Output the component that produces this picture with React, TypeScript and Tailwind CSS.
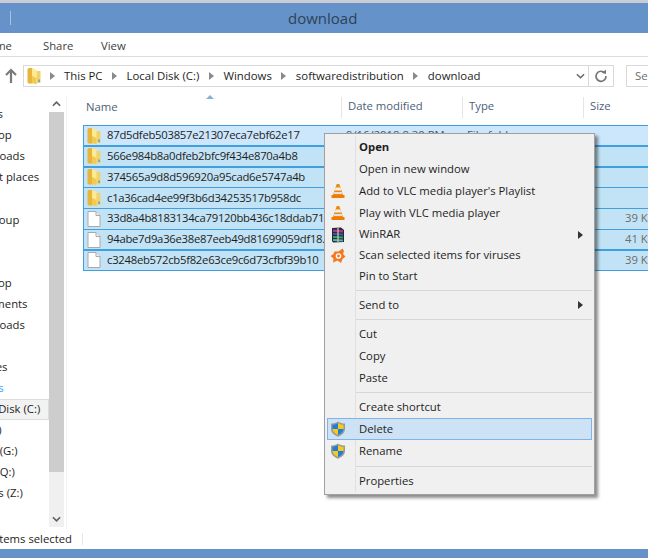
import type { ReactNode } from "react"

const font = { fontFamily: '"Open Sans", "Noto Sans", sans-serif' }

function FolderIcon() {
  return (
    <svg viewBox="0 0 14 18" className="h-[18px] w-[14px] shrink-0">
      <path d="M0.5 2.5 L1.5 1 H5 L6 2 V16.5 H1.5 L0.5 15.5 Z" fill="#e6b63c" />
      <path d="M5 1 L9.5 3 V17.5 L5 15.5 Z" fill="#fdeb94" />
      <path d="M9.5 4 H13.5 V16 H9.5 Z" fill="#f6d265" />
      <path d="M5 9 L9.5 11 V17.5 L5 15.5 Z" fill="#f3c94f" />
      <path d="M11.4 12.5 h1.4 v2.4 h-1.4 z" fill="#3f9fd8" />
    </svg>
  )
}

function FileIcon() {
  return (
    <svg viewBox="0 0 14 18" className="h-[18px] w-[14px] shrink-0">
      <path d="M1 1.5 H9 L13 5.5 V16.5 H1 Z" fill="#fff" stroke="#a9a9a9" />
      <path d="M9 1.5 V5.5 H13" fill="#eee" stroke="#a9a9a9" />
    </svg>
  )
}

function VlcIcon() {
  return (
    <svg viewBox="0 0 16 16" className="h-4 w-4">
      <path d="M6.7 1 H9.3 L13 12 H3 Z" fill="#ee8a12" />
      <path d="M5.6 4.6 H10.4 L11.2 7.6 H4.6 Z" fill="#f3f0ea" />
      <path d="M4.2 9 H11.8 L12.4 11 H3.6 Z" fill="#e4e0da" />
      <path d="M1.5 12 H14.5 V15 H1.5 Z" fill="#f07c08" />
    </svg>
  )
}

function WinRarIcon() {
  return (
    <svg viewBox="0 0 16 16" className="h-4 w-4">
      <path d="M2 1 L11 0.5 L14 3 V15 L3 15.5 L2 14 Z" fill="#2b2533" />
      <path d="M3 2.5 L13 3 V5.5 L3 5 Z" fill="#a43a8c" />
      <path d="M3 6 L13 6.5 V8.5 L3 8 Z" fill="#3c55b8" />
      <path d="M3 9 L13 9.5 V11.5 L3 11 Z" fill="#35a858" />
      <path d="M3 12 L13 12.5 V14.5 L3 14 Z" fill="#49b6c4" />
      <path d="M7 1 H9 V15 H7 Z" fill="#c9c2a8" opacity=".65" />
    </svg>
  )
}

function AvastIcon() {
  return (
    <svg viewBox="0 0 16 16" className="h-4 w-4">
      <path
        d="M8.5 3.5 L12.5 0.5 L14 3 L13 6 L15.5 8.5 L12.5 11 L11 15 L7.5 12.5 L3 14.5 L3.5 10.5 L0.5 8 L3.5 6 L4.5 3.5 Z"
        fill="#f4781f"
        strokeLinejoin="round"
      />
      <circle cx="8.5" cy="8" r="2.8" fill="#fff" />
      <circle cx="8.5" cy="8" r="1.4" fill="#f4781f" />
    </svg>
  )
}

function ShieldIcon() {
  return (
    <svg viewBox="0 0 16 16" className="h-4 w-4">
      <path d="M8 .5 C10 2 12.5 2.5 15 2.5 V8 C15 12 11 14.5 8 15.8 C5 14.5 1 12 1 8 V2.5 C3.5 2.5 6 2 8 .5 Z" fill="#9a9a9a" />
      <path d="M8 2 V8 H2.5 V3.8 C4.5 3.8 6.5 3.2 8 2 Z" fill="#1f7fd6" />
      <path d="M8 2 C9.5 3.2 11.5 3.8 13.5 3.8 V8 H8 Z" fill="#f6c91c" />
      <path d="M2.5 8 H8 V14 C5.5 12.8 2.8 11 2.5 8 Z" fill="#f6c91c" />
      <path d="M8 8 H13.5 C13.2 11 10.5 12.8 8 14 Z" fill="#1f7fd6" />
    </svg>
  )
}

function SubArrow() {
  return (
    <svg viewBox="0 0 5 8" className="h-2 w-[5px]">
      <path d="M0 0 L5 4 L0 8 Z" fill="#333" />
    </svg>
  )
}

function Crumb() {
  return (
    <svg viewBox="0 0 5 8" className="mx-[9.5px] h-2 w-[5px] shrink-0">
      <path d="M0 0 L5 4 L0 8 Z" fill="#8a8a8a" />
    </svg>
  )
}

function AddressBar() {
  return (
    <div className="flex h-[38px] shrink-0 items-center pl-[3px] text-[11.4px]">
      <svg viewBox="0 0 16 16" className="h-4 w-4 shrink-0">
        <path d="M8 2 V15 M3 7 L8 2 L13 7" fill="none" stroke="#7a7a7a" strokeWidth="2.2" />
      </svg>
      <div className="ml-[4px] flex h-[22px] shrink-0 basis-[591px] items-center border border-[#d9d9d9] pl-[3px]">
        <FolderIcon />
        <span className="-ml-px flex items-center">
          <Crumb />
        </span>
        <span>This PC</span>
        <Crumb />
        <span>Local Disk (C:)</span>
        <Crumb />
        <span>Windows</span>
        <Crumb />
        <span>softwaredistribution</span>
        <Crumb />
        <span>download</span>
        <div className="ml-auto flex h-full items-center">
          <svg viewBox="0 0 10 6" className="mr-[3px] h-[6px] w-[9px]">
            <path d="M1 1 L5 5 L9 1" fill="none" stroke="#666" strokeWidth="1.6" />
          </svg>
          <div className="flex h-full w-[25px] items-center justify-center border-l border-[#d9d9d9]">
            <svg viewBox="0 0 14 14" className="h-[14px] w-[14px]">
              <path d="M10.8 4 A5 5 0 1 0 12 7" fill="none" stroke="#777" strokeWidth="1.7" />
              <path d="M7.5 3.8 L12 5 V.8 Z" fill="#777" />
            </svg>
          </div>
        </div>
      </div>
      <div className="ml-[12px] flex h-[22px] grow items-center border border-[#d9d9d9] pl-[8px] text-[#6d6d6d]">
        Se
      </div>
    </div>
  )
}

// names are cut off by the left window edge in the shot, so offset each full label
const navItems: { label: string; cut: number; top?: number; cls?: string }[] = [
  { label: "Favorites", cut: 45 },
  { label: "Desktop", cut: 32 },
  { label: "Downloads", cut: 34 },
  { label: "Recent places", cut: 33 },
  { label: "Homegroup", cut: 44, top: 22 },
  { label: "Desktop", cut: 32, top: 42 },
  { label: "Documents", cut: 33 },
  { label: "Downloads", cut: 34 },
  { label: "Music", cut: 32, cls: "invisible" },
  { label: "Pictures", cut: 35 },
  { label: "Libraries", cut: 42, cls: "text-[#3aa2f2]" },
]

const driveItems = [
  { label: "Local Disk (C:)", cut: 33, selected: true },
  { label: "Data (D:)", cut: 44 },
  { label: "Backup (G:)", cut: 42 },
  { label: "Storage (Q:)", cut: 47 },
  { label: "Shares (Z:)", cut: 32 },
]

function Sidebar() {
  return (
    <div className="flex h-full w-[67px] shrink-0 border-r border-[#f2f2f2]">
      <div className="w-[49px] shrink-0 overflow-hidden whitespace-nowrap pt-[9px]">
        {navItems.map((n, i) => (
          <div
            key={i}
            className={"flex h-[21px] items-center " + (n.cls ?? "")}
            style={{ marginLeft: -n.cut, marginTop: n.top ?? 0 }}
          >
            {n.label}
          </div>
        ))}
        {driveItems.map((n) => (
          <div
            key={n.label}
            className={"flex h-[21px] items-center " + (n.selected ? "border border-[#dcdcdc] bg-[#f2f2f2]" : "")}
            style={{ marginLeft: -n.cut }}
          >
            {n.label}
          </div>
        ))}
      </div>
      <div className="flex h-[432px] w-[15px] shrink-0 flex-col bg-[#f0f0f0]">
        <div className="flex h-[17px] items-center justify-center bg-white">
          <svg viewBox="0 0 10 6" className="h-[6px] w-[9px]">
            <path d="M1 5 L5 1 L9 5" fill="none" stroke="#606060" strokeWidth="1.8" />
          </svg>
        </div>
        <div className="h-[360px] bg-[#cdcdcd]" />
        <div className="mt-auto flex h-[17px] items-center justify-center">
          <svg viewBox="0 0 10 6" className="h-[6px] w-[9px]">
            <path d="M1 1 L5 5 L9 1" fill="none" stroke="#606060" strokeWidth="1.8" />
          </svg>
        </div>
      </div>
    </div>
  )
}

const rows = [
  { name: "87d5dfeb503857e21307eca7ebf62e17", folder: true },
  { name: "566e984b8a0dfeb2bfc9f434e870a4b8", folder: true },
  { name: "374565a9d8d596920a95cad6e5747a4b", folder: true },
  { name: "c1a36cad4ee99f3b6d34253517b958dc", folder: true },
  { name: "33d8a4b8183134ca79120bb436c18ddab71", size: "39 KB" },
  { name: "94abe7d9a36e38e87eeb49d81699059df18.cab", size: "41 KB" },
  { name: "c3248eb572cb5f82e63ce9c6d73cfbf39b10", size: "39 KB" },
]

function FileList() {
  return (
    <div className="min-w-0 grow overflow-hidden pl-[16px]">
      <div className="relative mb-[6px] flex h-[24px] items-center text-[#4c607a]">
        <span className="w-[258px] pl-[3px]">Name</span>
        <span className="h-[21px] w-[121px] border-l border-[#e5e5e5] pt-[1px] pl-[6px]">Date modified</span>
        <span className="h-[21px] w-[121px] border-l border-[#e5e5e5] pt-[1px] pl-[6px]">Type</span>
        <span className="h-[21px] w-[60px] border-l border-[#e5e5e5] pt-[1px] pl-[6px]">Size</span>
        <svg viewBox="0 0 8 4" className="absolute top-0 left-[123px] h-1 w-2">
          <path d="M0 4 L4 0 L8 4 Z" fill="#7fb2dc" />
        </svg>
      </div>
      <div className="flex w-[600px] flex-col">
        {rows.map((r, i) => (
          <div
            key={r.name}
            className={
              "flex h-[21.4px] items-center whitespace-nowrap border border-[#3f9fe0] pl-[3px] " +
              (i === 0 ? "bg-[#cce6fb]" : "bg-[#c2e3f5]") +
              (i > 0 ? " -mt-[0.6px]" : "")
            }
          >
            {r.folder ? <FolderIcon /> : <FileIcon />}
            <span className="ml-[6px] w-[232px] shrink-0 overflow-hidden tracking-[-0.27px] text-[#1e1e1e]">{r.name}</span>
            {i === 0 ? (
              <>
                <span className="ml-[7px] w-[121px] shrink-0 text-[#555]">9/16/2018 8:30 PM</span>
                <span className="text-[#555]">File folder</span>
              </>
            ) : (
              <span className="ml-[286px] text-right text-[#6d6d6d]">{r.size}</span>
            )}
          </div>
        ))}
      </div>
    </div>
  )
}

type MenuEntry =
  | { sep: true; h: number }
  | { sep?: false; label: string; h: number; icon?: ReactNode; bold?: boolean; sub?: boolean; active?: boolean }

const menu: MenuEntry[] = [
  { label: "Open", h: 22, bold: true },
  { label: "Open in new window", h: 22 },
  { label: "Add to VLC media player's Playlist", h: 22, icon: <VlcIcon /> },
  { label: "Play with VLC media player", h: 22, icon: <VlcIcon /> },
  { label: "WinRAR", h: 21, icon: <WinRarIcon />, sub: true },
  { label: "Scan selected items for viruses", h: 21, icon: <AvastIcon /> },
  { label: "Pin to Start", h: 21 },
  { sep: true, h: 7 },
  { label: "Send to", h: 22, sub: true },
  { sep: true, h: 7 },
  { label: "Cut", h: 22 },
  { label: "Copy", h: 22 },
  { label: "Paste", h: 22 },
  { sep: true, h: 7 },
  { label: "Create shortcut", h: 22 },
  { label: "Delete", h: 22, icon: <ShieldIcon />, active: true },
  { label: "Rename", h: 22, icon: <ShieldIcon /> },
  { sep: true, h: 8 },
  { label: "Properties", h: 22 },
]

function ContextMenu() {
  return (
    <div className="absolute top-[133px] left-[324px] w-[271px] border border-[#a0a0a0] bg-[#f0f0f0] p-[2px] text-[#1e1e1e] shadow-[3px_3px_3px_rgba(0,0,0,0.45)]">
      <div className="absolute top-[2px] bottom-[2px] left-[30px] w-px bg-[#e0e0e0]" />
      {menu.map((m, i) =>
        m.sep ? (
          <div key={i} className="flex items-center pl-[29px]" style={{ height: m.h }}>
            <div className="h-px w-full bg-[#d7d7d7]" />
          </div>
        ) : (
          <div
            key={m.label}
            className={
              "relative flex items-center border " +
              (m.active ? "border-[#7eb4ea] bg-[#cde2f4]" : "border-transparent") +
              (m.bold ? " font-bold" : "")
            }
            style={{ height: m.h }}
          >
            <span className="flex w-[26px] shrink-0 items-center pl-[2px]">{m.icon}</span>
            <span className="pl-[5px]">{m.label}</span>
            {m.sub && (
              <span className="mr-[8px] ml-auto flex items-center">
                <SubArrow />
              </span>
            )}
          </div>
        )
      )}
    </div>
  )
}

export default function App() {
  return (
    <div className="relative flex h-[558px] w-[648px] flex-col overflow-hidden bg-white text-[11.3px] text-[#1e1e1e]" style={font}>
      <div className="h-[3px] shrink-0 bg-[#c9ccd2]" />
      <div className="flex h-[30px] shrink-0 items-center bg-[#6593c9]">
        <div className="ml-[10px] h-[14px] w-px bg-[#a9c2de]" />
        <span className="ml-[277px] text-[15px] text-[#2e4257]">download</span>
      </div>
      <div className="flex h-[24px] shrink-0 items-center border-b border-[#dcdcdc] pt-[3px] text-[#3d3d3d]">
        <span className="-ml-[20px] w-[63px]">Home</span>
        <span className="w-[58px]">Share</span>
        <span>View</span>
      </div>
      <AddressBar />
      <div className="flex min-h-0 grow">
        <Sidebar />
        <FileList />
      </div>
      <div className="flex h-[20px] shrink-0 items-center whitespace-nowrap">
        <span className="-ml-[13px] w-[95px]">7 items selected</span>
        <div className="h-[12px] w-px bg-[#e5e5e5]" />
      </div>
      <div className="h-[9px] shrink-0 bg-[#6593c9]" />
      <ContextMenu />
    </div>
  )
}
